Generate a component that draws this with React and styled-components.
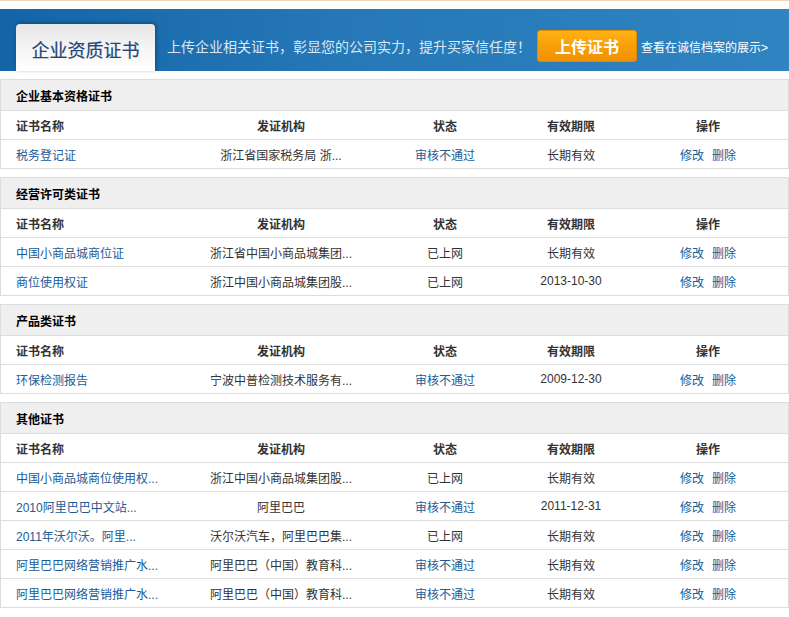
import React from "react";
import styled, { createGlobalStyle } from "styled-components";

const GlobalStyle = createGlobalStyle`
  html, body { margin: 0; padding: 0; background: #fff; }
  body {
    font-family: "Liberation Sans", "Noto Sans CJK SC", sans-serif;
    font-size: 12px;
    color: #333;
  }
`;

const Page = styled.div`
  width: 789px;
`;

const TopLine = styled.div`
  height: 1px;
  background: #efd9b4;
  margin-bottom: 8px;
`;

const Banner = styled.div`
  height: 62px;
  box-sizing: border-box;
  padding: 12px 0 0 16px;
  display: flex;
  align-items: center;
  background: linear-gradient(to right, #1465a8 0%, #2678b7 45%, #2f84c1 100%);
`;

const Tab = styled.div`
  align-self: flex-end;
  width: 139px;
  height: 47px;
  border-radius: 4px 4px 0 0;
  background: linear-gradient(to bottom, #e6e6e6 0%, #f6f6f6 55%, #ffffff 100%);
  box-shadow: 1px -1px 4px rgba(0, 0, 0, 0.35);
  display: flex;
  align-items: center;
  justify-content: center;
  padding-top: 2px;
  box-sizing: border-box;
  font-family: "Noto Sans CJK SC", sans-serif;
  font-size: 18px;
  color: #21467a;
  -webkit-text-stroke: 0.2px #21467a;
`;

const Slogan = styled.div`
  margin-left: 12px;
  font-family: "Noto Sans CJK SC", sans-serif;
  font-size: 14px;
  color: #d9e8f5;
  white-space: nowrap;
`;

const UploadButton = styled.button`
  margin-left: 6px;
  width: 100px;
  height: 32px;
  border: 1px solid #e38a00;
  border-radius: 3px;
  background: linear-gradient(to bottom, #ffb114 0%, #f89f08 50%, #f29000 100%);
  color: #fff;
  font-family: "Noto Sans CJK SC", sans-serif;
  font-size: 16px;
  font-weight: bold;
  padding: 0;
  cursor: pointer;
`;

const ArchiveLink = styled.a`
  margin-left: 4px;
  color: #fff;
  font-size: 12px;
  text-decoration: none;
  white-space: nowrap;
`;

const Content = styled.div`
  margin-top: 8px;
`;

const Section = styled.div`
  border: 1px solid #dddddd;
  margin-bottom: 8px;
`;

const SectionHeader = styled.div`
  height: 30px;
  background: #efefef;
  display: flex;
  align-items: center;
  padding-left: 15px;
  font-weight: bold;
  color: #000;
`;

const Row = styled.div`
  display: grid;
  grid-template-columns: 185px 190px 138px 114px 1fr;
  height: 28px;
  border-top: 1px solid #dddddd;
  font-weight: ${(p) => (p.$head ? "bold" : "normal")};
  color: #333;
`;

const Cell = styled.div`
  display: flex;
  align-items: center;
  justify-content: ${(p) => (p.$left ? "flex-start" : "center")};
  padding-left: ${(p) => (p.$left ? "15px" : "0")};
  white-space: nowrap;
  overflow: hidden;
  gap: 8px;
`;

const Link = styled.a`
  color: #205b97;
  text-decoration: none;
`;

const cols = ["证书名称", "发证机构", "状态", "有效期限", "操作"];

const data = [
  {
    title: "企业基本资格证书",
    rows: [["税务登记证", "浙江省国家税务局 浙...", "审核不通过", "长期有效"]],
  },
  {
    title: "经营许可类证书",
    rows: [
      ["中国小商品城商位证", "浙江省中国小商品城集团...", "已上网", "长期有效"],
      ["商位使用权证", "浙江中国小商品城集团股...", "已上网", "2013-10-30"],
    ],
  },
  {
    title: "产品类证书",
    rows: [["环保检测报告", "宁波中普检测技术服务有...", "审核不通过", "2009-12-30"]],
  },
  {
    title: "其他证书",
    rows: [
      ["中国小商品城商位使用权...", "浙江中国小商品城集团股...", "已上网", "长期有效"],
      ["2010阿里巴巴中文站...", "阿里巴巴", "审核不通过", "2011-12-31"],
      ["2011年沃尔沃。阿里...", "沃尔沃汽车，阿里巴巴集...", "已上网", "长期有效"],
      ["阿里巴巴网络营销推广水...", "阿里巴巴（中国）教育科...", "审核不通过", "长期有效"],
      ["阿里巴巴网络营销推广水...", "阿里巴巴（中国）教育科...", "审核不通过", "长期有效"],
    ],
  },
];

export default function App() {
  return (
    <>
      <GlobalStyle />
      <Page>
        <TopLine />
        <Banner>
          <Tab>企业资质证书</Tab>
          <Slogan>上传企业相关证书，彰显您的公司实力，提升买家信任度！</Slogan>
          <UploadButton>上传证书</UploadButton>
          <ArchiveLink href="#">查看在诚信档案的展示&gt;</ArchiveLink>
        </Banner>
        <Content>
          {data.map((sec) => (
            <Section key={sec.title}>
              <SectionHeader>{sec.title}</SectionHeader>
              <Row $head>
                {cols.map((c, i) => (
                  <Cell key={c} $left={i === 0}>
                    {c}
                  </Cell>
                ))}
              </Row>
              {sec.rows.map((r, idx) => (
                <Row key={idx}>
                  <Cell $left>
                    <Link href="#">{r[0]}</Link>
                  </Cell>
                  <Cell>{r[1]}</Cell>
                  <Cell>{r[2] === "审核不通过" ? <Link href="#">{r[2]}</Link> : r[2]}</Cell>
                  <Cell>{r[3]}</Cell>
                  <Cell>
                    <Link href="#">修改</Link>
                    <Link href="#">删除</Link>
                  </Cell>
                </Row>
              ))}
            </Section>
          ))}
        </Content>
      </Page>
    </>
  );
}
